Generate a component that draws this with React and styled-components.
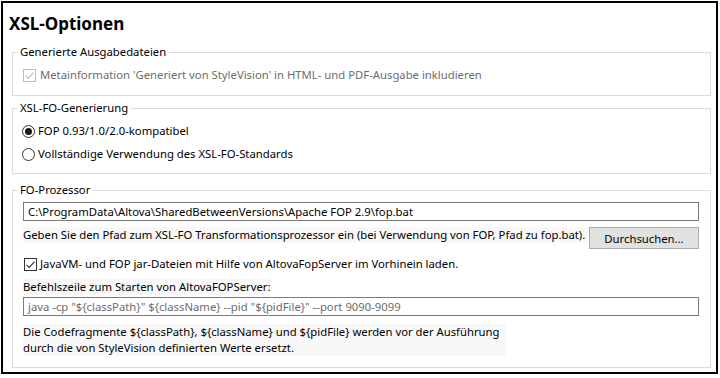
import React from "react";
import styled, { createGlobalStyle } from "styled-components";

const GlobalStyle = createGlobalStyle`
  html, body {
    margin: 0;
    padding: 0;
    background: #ffffff;
  }
  body {
    font-family: "Noto Sans", "Open Sans", sans-serif;
    font-size: 11.3px;
    color: #000000;
  }
`;

const Frame = styled.div`
  box-sizing: border-box;
  margin: 1px 0 0 1px;
  width: 717px;
  height: 373px;
  border: 2px solid #000000;
  display: flex;
  flex-direction: column;
`;

const Title = styled.h1`
  margin: 9px 0 0 6px;
  font-size: 17px;
  line-height: 24px;
  font-weight: 700;
`;

const Groups = styled.div`
  display: flex;
  flex-direction: column;
  padding: 8px 5px 0 9px;
`;

const Group = styled.fieldset`
  margin: ${(p) => p.$top || 0}px 0 0 0;
  padding: 0 11px ${(p) => p.$bottom || 11}px 10px;
  border: 1px solid #dcdcdc;
  min-inline-size: 0;
  display: flex;
  flex-direction: column;
`;

const Legend = styled.legend`
  margin-left: -6px;
  padding: 0 3px;
  line-height: 16px;
`;

const Row = styled.label`
  display: flex;
  align-items: center;
  gap: ${(p) => p.$gap || 4}px;
  height: 16px;
  line-height: 16px;
  margin-top: ${(p) => p.$top || 7}px;
  color: ${(p) => (p.$disabled ? "#6d6d6d" : "#000000")};
  white-space: nowrap;
`;

const Box = styled.svg`
  flex: none;
  width: 13px;
  height: 13px;
  margin-left: ${(p) => p.$left || 0}px;
`;

const PathInput = styled.div`
  box-sizing: border-box;
  height: 19px;
  margin-top: ${(p) => p.$top || 0}px;
  padding: 0 4px;
  border: 1px solid #7a7a7a;
  line-height: 17px;
  color: ${(p) => (p.$muted ? "#6d6d6d" : "#000000")};
  white-space: nowrap;
  overflow: hidden;
`;

const HintRow = styled.div`
  display: flex;
  justify-content: space-between;
  align-items: center;
  margin-top: 6px;
  height: 22px;
`;

const Note = styled.div`
  align-self: flex-start;
  background: #f8f8f8;
  line-height: 16px;
  margin-top: ${(p) => p.$top || 0}px;
  padding-right: ${(p) => p.$right || 0}px;
  white-space: pre-line;
`;

const Button = styled.button`
  box-sizing: border-box;
  width: 110px;
  height: 22px;
  padding: 0;
  border: 1px solid #adadad;
  background: #e1e1e1;
  font-family: inherit;
  font-size: 11.3px;
  color: #000000;
`;

function CheckBox({ disabled, left }) {
  const c = disabled ? "#bcbcbc" : "#333333";
  return (
    <Box $left={left} viewBox="0 0 13 13">
      <rect x="0.5" y="0.5" width="12" height="12" fill="#ffffff" stroke={c} />
      <path d="M2.5 6.8 L5.2 9.4 L10.6 3.6" fill="none" stroke={c} strokeWidth="1.1" />
    </Box>
  );
}

function Radio({ checked }) {
  return (
    <Box $left={-1} viewBox="0 0 13 13">
      <circle cx="6.5" cy="6.5" r="6" fill="#ffffff" stroke="#333333" />
      {checked && <circle cx="6.5" cy="6.5" r="3.5" fill="#1a1a1a" />}
    </Box>
  );
}

export default function App() {
  return (
    <>
      <GlobalStyle />
      <Frame>
        <Title>XSL-Optionen</Title>
        <Groups>
          <Group $bottom={12}>
            <Legend>Generierte Ausgabedateien</Legend>
            <Row $disabled>
              <CheckBox disabled />
              Metainformation 'Generiert von StyleVision' in HTML- und PDF-Ausgabe inkludieren
            </Row>
          </Group>

          <Group $top={4} $bottom={11}>
            <Legend>XSL-FO-Generierung</Legend>
            <Row $gap={3}>
              <Radio checked />
              FOP 0.93/1.0/2.0-kompatibel
            </Row>
            <Row $gap={3}>
              <Radio />
              Vollständige Verwendung des XSL-FO-Standards
            </Row>
          </Group>

          <Group $top={8} $bottom={11}>
            <Legend>FO-Prozessor</Legend>
            <PathInput $top={4}>
              C:\ProgramData\Altova\SharedBetweenVersions\Apache FOP 2.9\fop.bat
            </PathInput>
            <HintRow>
              <Note $right={2}>
                Geben Sie den Pfad zum XSL-FO Transformationsprozessor ein (bei Verwendung von FOP, Pfad zu fop.bat).
              </Note>
              <Button>Durchsuchen...</Button>
            </HintRow>
            <Row $gap={3}>
              <CheckBox left={1} />
              JavaVM- und FOP jar-Dateien mit Hilfe von AltovaFopServer im Vorhinein laden.
            </Row>
            <Note $top={7}>Befehlszeile zum Starten von AltovaFOPServer:</Note>
            <PathInput $top={2} $muted>
              java -cp "${"{classPath}"}" ${"{className}"} --pid "${"{pidFile}"}" --port 9090-9099
            </PathInput>
            <Note $top={8} $right={6}>
              {"Die Codefragmente ${classPath}, ${className} und ${pidFile} werden vor der Ausführung\ndurch die von StyleVision definierten Werte ersetzt."}
            </Note>
          </Group>
        </Groups>
      </Frame>
    </>
  );
}
